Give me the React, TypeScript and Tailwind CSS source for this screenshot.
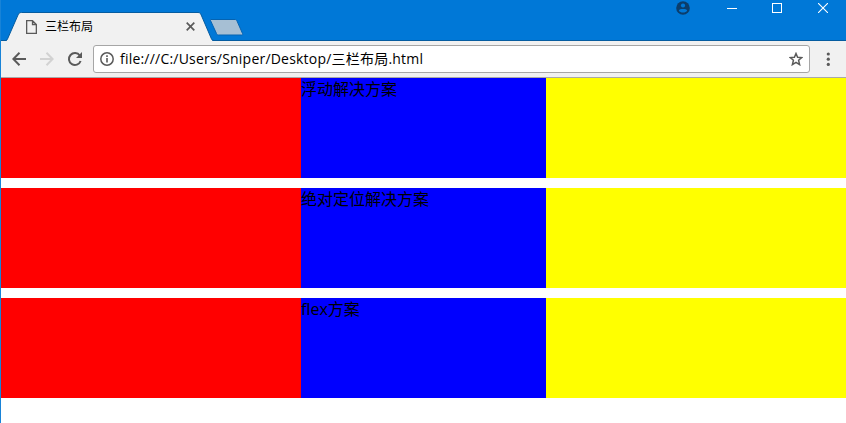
import React from "react";

function TitleBar() {
  return (
    <header className="flex h-[41px] items-start border-b border-[#055ca0] bg-[#0078d7]">
      <div className="relative mt-3 ml-[2px] h-[29px] w-[211px] shrink-0">
        <svg className="absolute inset-0" width="211" height="29" viewBox="0 0 211 29">
          <path d="M3.500 29L4.500 27L15 3C15.700 1.300 16.500 .5 18.500 .5H195C197 .5 197.500 1.300 198.200 3L208.500 27L209.500 29Z" fill="#f1f1f1" />
          <path d="M0 28.500H2.500Q3.800 28.500 4.500 27L15 3C15.700 1.300 16.500 .5 18.500 .5H195C197 .5 197.500 1.300 198.200 3L208.500 27Q209.200 28.500 211 28.500" fill="none" stroke="#055ca0" />
        </svg>
        <div className="relative flex h-full items-center pl-[23px]">
          <svg width="11" height="14" viewBox="0 0 11 14" fill="none" stroke="#5a5a5a" strokeWidth="1.300">
            <path d="M.65 .65H6.500L10.350 4.500V13.350H.65ZM6.500 .65V4.500H10.350" />
          </svg>
          <span className="ml-[8px] text-[12px] leading-none text-black">三栏布局</span>
          <svg className="ml-auto mr-[19px]" width="9" height="9" viewBox="0 0 9 9" stroke="#5a5a5a" strokeWidth="1.700">
            <path d="M.7 .7L8.300 8.300M8.300 .7L.7 8.300" />
          </svg>
        </div>
      </div>
      <svg className="mt-[19px] -ml-[5px]" width="36" height="18" viewBox="0 0 36 18">
        <path d="M2 .5H26C27 .5 27.500 1 28 2L33.500 14.500C34 15.700 33.500 16 32.500 16H9.500C8.500 16 8 15.500 7.500 14.500L1.500 1.500Q1 .5 2 .5Z" fill="#a6bfd4" stroke="#0563b1" />
      </svg>
      <div className="ml-auto flex items-start text-white">
        <svg className="mt-px mr-[37px]" width="14" height="14" viewBox="0 0 14 14">
          <circle cx="7" cy="7" r="6.800" fill="#0b3d6b" />
          <circle cx="7" cy="4.500" r="2.100" fill="#0078d7" />
          <path d="M2.800 9.500C3.800 7.600 10.200 7.600 11.200 9.500C9.800 12.200 4.200 12.200 2.800 9.500Z" fill="#0078d7" />
        </svg>
        <span className="mt-2 mr-[35px] h-px w-[10px] bg-white" />
        <span className="mt-[3px] mr-[36px] h-[10px] w-[10px] border border-white" />
        <svg className="mt-[3px] mr-[18px]" width="10" height="10" viewBox="0 0 10 10" stroke="white" strokeWidth="1.100">
          <path d="M0 0L10 10M10 0L0 10" />
        </svg>
      </div>
    </header>
  );
}

function Toolbar() {
  return (
    <div className="flex h-[37px] items-center border-b border-[#a9a9a9] bg-[#f1f1f1]">
      <svg className="ml-[11px]" width="14" height="14" viewBox="0 0 14 14" fill="none" stroke="#5a5a5a" strokeWidth="2">
        <path d="M14 7H1.500M7.500 .8L1.300 7L7.500 13.200" />
      </svg>
      <svg className="ml-[14px]" width="14" height="14" viewBox="0 0 14 14" fill="none" stroke="#d2d2d2" strokeWidth="2">
        <path d="M0 7H12.500M6.500 .8L12.700 7L6.500 13.200" />
      </svg>
      <svg className="ml-[13px]" width="16" height="16" viewBox="0 0 16 16">
        <path d="M12.800 4.500A6 6 0 1 0 13.600 10" fill="none" stroke="#5a5a5a" strokeWidth="2" />
        <path d="M15 1V7H9Z" fill="#5a5a5a" />
      </svg>
      <div className="ml-[10px] flex h-7 w-[717px] items-center rounded-[3px] border border-[#a6a6a6] bg-white">
        <svg className="ml-[6px]" width="14" height="14" viewBox="0 0 14 14">
          <circle cx="7" cy="7" r="6.200" fill="none" stroke="#5a5a5a" strokeWidth="1.500" />
          <path d="M6.200 3.300H7.800V4.900H6.200ZM6.200 6H7.800V10.500H6.200Z" fill="#5a5a5a" />
        </svg>
        <span className="ml-[6px] text-[14px] leading-none tracking-[0.21px] whitespace-nowrap text-black">file:///C:/Users/Sniper/Desktop/三栏布局.html</span>
        <svg className="ml-auto mr-[6px]" width="14" height="14" viewBox="0 0 14 14">
          <path d="M7 1.500L8.600 5.200L12.800 5.600L9.600 8.300L10.600 12.600L7 10.300L3.400 12.600L4.400 8.300L1.200 5.600L5.400 5.200Z" fill="none" stroke="#5a5a5a" strokeWidth="1.500" />
        </svg>
      </div>
      <svg className="ml-[16px]" width="4" height="14" viewBox="0 0 4 14" fill="#5a5a5a">
        <circle cx="2.300" cy="2" r="1.600" />
        <circle cx="2.300" cy="7.200" r="1.600" />
        <circle cx="2.300" cy="12.400" r="1.600" />
      </svg>
    </div>
  );
}

function Row({ label }: { label: string }) {
  return (
    <section className="flex h-[100px]">
      <div className="w-[300px] bg-[#ff0000]" />
      <div className="flex-1 bg-[#0000ff] text-[16px] leading-[22px] text-black">{label}</div>
      <div className="w-[300px] bg-[#ffff00]" />
    </section>
  );
}

export default function App() {
  return (
    <div className="h-[423px] w-[846px] overflow-hidden border-l border-[#1883d7] bg-white font-['Open_Sans','Noto_Sans_CJK_SC',sans-serif]">
      <TitleBar />
      <Toolbar />
      <main className="flex flex-col gap-[10px]">
        <Row label="浮动解决方案" />
        <Row label="绝对定位解决方案" />
        <Row label="flex方案" />
      </main>
    </div>
  );
}
